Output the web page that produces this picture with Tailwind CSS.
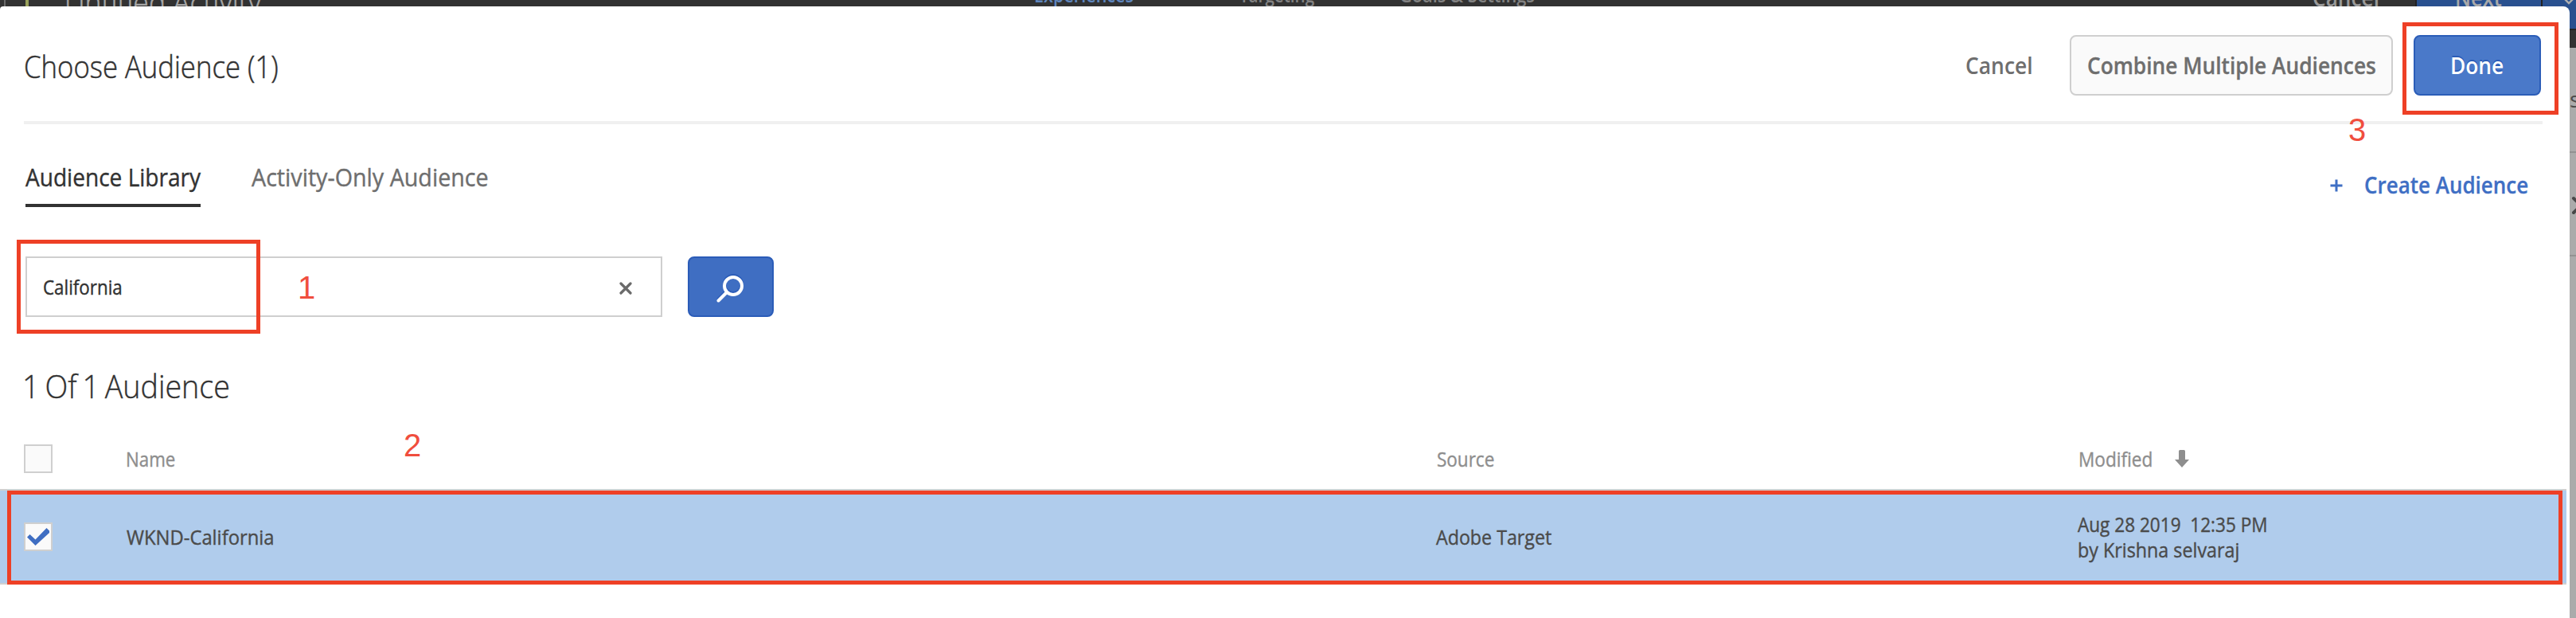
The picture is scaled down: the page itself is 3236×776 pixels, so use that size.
<!DOCTYPE html>
<html lang="en">
<head>
<meta charset="utf-8">
<title>Choose Audience</title>
<script src="https://cdn.jsdelivr.net/npm/@tailwindcss/browser@4"></script>
</head>
<body class="bg-[#ababab]">
<div class="relative w-[3236px] h-[776px] overflow-hidden font-['Open_Sans',sans-serif] whitespace-nowrap">

  <!-- Dimmed page behind the dialog -->
  <div class="absolute inset-0">
    <div class="relative h-[60px] bg-[#323232]">
      <div class="absolute left-[5px] top-0 w-[2px] h-[8px] bg-[#6a6a6a]"></div>
      <div class="absolute left-[32px] top-0 w-[4px] h-[8px] bg-[#98a05a]"></div>
      <span class="absolute left-[81px] -top-[24px] leading-[52px] text-[39px] font-light text-[#a8a8a8] origin-left scale-x-[.911] [-webkit-text-stroke:0.5px]">Untitled Activity</span>
      <span class="absolute left-[1299px] -top-[23px] leading-[32px] text-[25px] font-semibold text-[#5f86be] origin-left scale-x-[.864]">Experiences</span>
      <span class="absolute left-[1557px] -top-[23px] leading-[32px] text-[25px] font-semibold text-[#828282] origin-left scale-x-[.823]">Targeting</span>
      <span class="absolute left-[1758px] -top-[23px] leading-[32px] text-[25px] font-semibold text-[#828282] origin-left scale-x-[.87]">Goals &amp; Settings</span>
      <span class="absolute left-[2905px] -top-[21px] leading-[36px] text-[28px] font-semibold text-[#999999] origin-left scale-x-[.937]">Cancel</span>
      <div class="absolute left-[3034px] top-0 w-[202px] h-[38px] bg-[#29508f] border-b-2 border-l-2 border-[#222222]"></div>
      <div class="absolute left-[3192px] top-0 w-[2px] h-[38px] bg-[#222222]"></div>
      <span class="absolute left-[3084px] -top-[21px] leading-[36px] text-[28px] font-semibold text-[#a9a9a9] origin-left scale-x-[.91]">Next</span>
      <svg class="absolute left-[3220px] top-0" width="14" height="8" viewBox="0 0 14 8" fill="none" stroke="#b0b0b0" stroke-width="2.4"><path d="M2 -1 L7 4 L12 -1"/></svg>
    </div>
    <span class="absolute left-[3228px] top-[104px] leading-[40px] text-[28px] text-[#4a4a4a]">s</span>
    <div class="absolute left-[3228px] top-[190px] w-[8px] h-[2px] bg-[#929292]"></div>
    <div class="absolute left-[3228px] top-[320px] w-[8px] h-[2px] bg-[#929292]"></div>
    <svg class="absolute left-[3228px] top-[242px]" width="8" height="32" viewBox="0 0 8 32" fill="none" stroke="#484848" stroke-width="4" stroke-linecap="round"><path d="M5 7 L14 16 L5 25"/></svg>
  </div>

  <!-- Dialog -->
  <main class="absolute left-0 top-[8px] w-[3228px] h-[768px] bg-white rounded-tl-[4px] rounded-tr-[8px]">
    <header class="ml-[30px] w-[3164px] h-[148px] pt-[36px] flex border-b-4 border-[#f0f0f0]">
      <h1 class="w-[2439px] h-[76px] flex items-center pt-[2px] text-[39px] font-light text-[#323232] [-webkit-text-stroke:0.5px]"><span class="origin-left scale-x-[.89]">Choose Audience (1)</span></h1>
      <button class="w-[131px] h-[76px] flex items-center pb-[1px] text-[28px] font-semibold text-[#6e6e6e]"><span class="origin-left scale-x-[.945]">Cancel</span></button>
      <button class="w-[406px] h-[76px] flex items-center pl-[20px] pb-[1px] rounded-[8px] border-2 border-[#cfcfcf] bg-[#fafafa] text-[28px] font-semibold text-[#6e6e6e] [-webkit-text-stroke:0.3px]"><span class="origin-left scale-x-[.94]">Combine Multiple Audiences</span></button>
      <button class="ml-[26px] w-[160px] h-[76px] flex items-center pl-[44px] pb-[1px] rounded-[8px] border-2 border-[#2b5db8] bg-[#4a79c9] text-[28px] font-semibold text-white [text-shadow:0_-2px_0_#2b5db8]"><span class="origin-left scale-x-[.94]">Done</span></button>
    </header>

    <nav class="mt-[32px] pl-[32px] h-[72px] flex">
      <a class="w-[220px] flex items-center border-b-4 border-[#323232] text-[31px] text-[#323232] [-webkit-text-stroke:0.4px]"><span class="origin-left scale-x-[.905]">Audience Library</span></a>
      <a class="ml-[64px] w-[2610px] h-[68px] flex items-center text-[31px] text-[#6e6e6e] [-webkit-text-stroke:0.4px]"><span class="origin-left scale-x-[.925]">Activity-Only Audience</span></a>
      <a class="h-[68px] pt-[20px] flex items-center text-[28px] font-semibold text-[#3f6fc4]">
        <svg class="mt-[2px] mr-[26px]" width="18" height="18" viewBox="0 0 18 18" fill="none" stroke="#3f6fc4" stroke-width="3"><path d="M9 1.5V16.5M1.5 9H16.5"/></svg>
        <span class="origin-left scale-x-[.928] [-webkit-text-stroke:0.3px]">Create Audience</span>
      </a>
    </nav>

    <div class="mt-[62px] ml-[32px] h-[76px] flex gap-8">
      <div class="w-[800px] border-2 border-[#cfcfcf] pl-[20px] pr-[36px] flex items-center justify-between text-[25px] text-[#323232]">
        <span class="pt-[2px] origin-left scale-x-[.895] [-webkit-text-stroke:0.4px]">California</span>
        <svg class="mt-[4px]" width="16" height="16" viewBox="0 0 16 16" fill="none" stroke="#6a6a6a" stroke-width="3.2" stroke-linecap="round"><path d="M2 2L14 14M14 2L2 14"/></svg>
      </div>
      <button class="w-[108px] rounded-[8px] border-2 border-[#2b5cb8] bg-[#3f6ec2] flex items-center justify-center">
        <svg width="40" height="40" viewBox="0 0 40 40" fill="none" stroke-linecap="round" stroke-width="4"><g stroke="#2b5cb8"><circle cx="23" cy="17" r="11"/><path d="M15 25L4.5 35.5"/></g><g stroke="#ffffff"><circle cx="23" cy="19" r="11"/><path d="M15 27L4.5 37.5"/></g></svg>
      </button>
    </div>

    <h2 class="mt-[57px] mb-[-1px] ml-[28px] h-[60px] flex items-center text-[40px] font-light text-[#323232] [-webkit-text-stroke:0.4px]"><span class="origin-left scale-x-[.94] [word-spacing:-3px]">1 Of 1 Audience</span></h2>

    <section class="w-[3224px] text-[25px] [-webkit-text-stroke:0.4px]">
      <div class="h-[102px] pt-[26px] pl-[30px] grid grid-cols-[128px_1647px_806px_1fr] items-center border-b-2 border-[#d0d0d0] text-[#8e8e8e]">
        <div class="-mt-[2px] size-[36px] border-2 border-[#cfcfcf] bg-[#fafafa]"></div>
        <span class="origin-left scale-x-[.892]">Name</span>
        <span class="origin-left scale-x-[.9]">Source</span>
        <div class="flex items-center">
          <span class="w-[121px] origin-left scale-x-[.905]">Modified</span>
          <svg class="-mt-[2px]" width="18" height="22" viewBox="0 0 18 22" fill="#8e8e8e"><path d="M6.5 0H11.5Q13 0 13 1.5V12H18L9 22L0 12H5V1.5Q5 0 6.5 0Z"/></svg>
        </div>
      </div>
      <div class="h-[118px] pl-[30px] grid grid-cols-[129px_1645px_806px_1fr] items-center border-b-2 border-[#d0d0d0] bg-[#b0ccec] text-[#4b4b4b]">
        <div class="size-[36px] border-2 border-[#cfcfcf] bg-[#fafafa] flex items-center justify-center">
          <svg width="32" height="32" viewBox="0 0 32 32" fill="#3f6ec2"><path d="M2 16.5L5.5 13L12.5 19.5L26.5 5L30 8.5V11L12.5 27Z"/></svg>
        </div>
        <span class="pt-[1px] origin-left scale-x-[.952]">WKND-California</span>
        <span class="pt-[1px] origin-left scale-x-[.929]">Adobe Target</span>
        <div class="flex flex-col items-start leading-[32px]">
          <span class="origin-left scale-x-[.903] whitespace-pre">Aug 28 2019  12:35 PM</span>
          <span class="origin-left scale-x-[.932]">by Krishna selvaraj</span>
        </div>
      </div>
    </section>
  </main>

  <!-- Step annotations -->
  <div class="absolute left-[21px] top-[301px] w-[306px] h-[118px] border-5 border-[#ee4026]"></div>
  <div class="absolute left-[9px] top-[616px] w-[3210px] h-[118px] border-5 border-[#ee4026]"></div>
  <div class="absolute left-[3018px] top-[28px] w-[196px] h-[116px] border-5 border-[#ee4026]"></div>
  <div class="font-['Liberation_Sans',sans-serif] text-[40px] leading-[40px] text-[#f04e3e]">
    <span class="absolute left-[374px] top-[341px]">1</span>
    <span class="absolute left-[507px] top-[539px]">2</span>
    <span class="absolute left-[2950px] top-[143px]">3</span>
  </div>
</div>
</body>
</html>
